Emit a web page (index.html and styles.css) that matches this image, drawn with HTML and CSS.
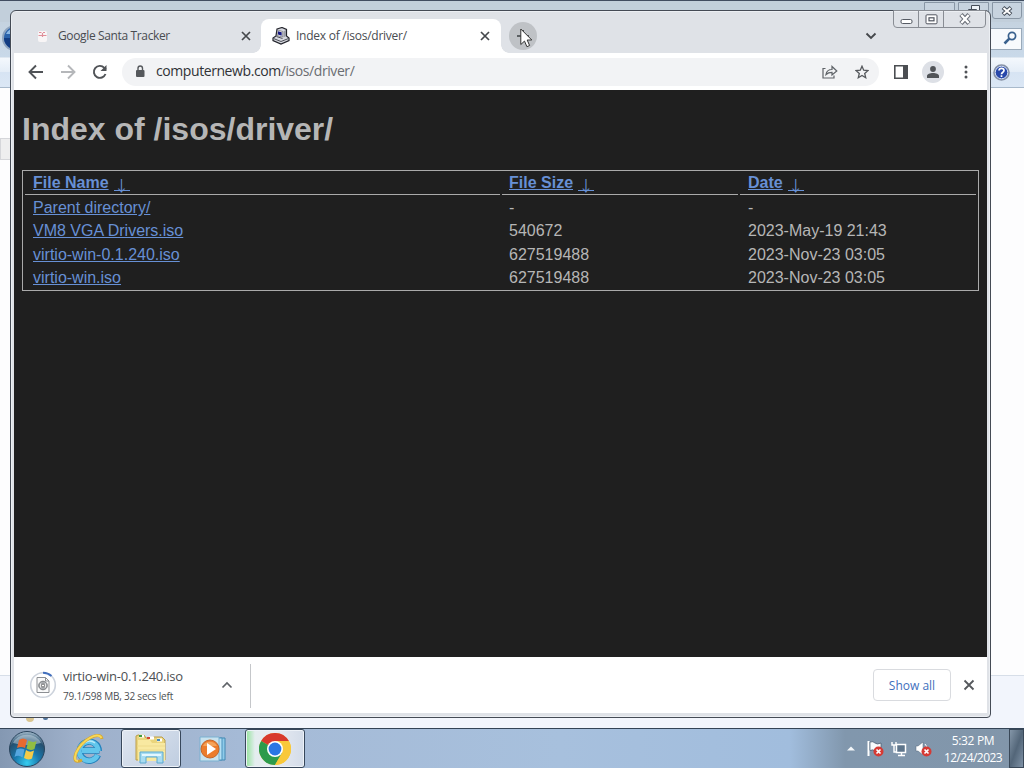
FILE: index.html
```html
<!DOCTYPE html>
<html lang="en">
<head>
    <meta charset="UTF-8">
    <meta name="viewport" content="width=device-width, initial-scale=1.0">
    <title>Index of /isos/driver/</title>
    <link rel="stylesheet" href="styles.css">
</head>
<body>

<div class="desktop">

    <!-- Explorer window behind the browser -->
    <div class="explorer">
        <div class="explorer-title">
            <div class="ex-buttons">
                <span class="ex-btn"></span>
                <span class="ex-btn"><svg width="14" height="12" viewBox="0 0 14 12" fill="#eef3f8" stroke="#454d59"><path d="M4.500 .5h8v6h-8z"/><path d="M1.500 4.500h8v6h-8z"/></svg></span>
                <span class="ex-btn ex-close"><svg width="12" height="10" viewBox="0 0 12 10"><path d="M2 1.500 10 8.500M10 1.500 2 8.500" stroke="#454d59" stroke-width="4"/><path d="M2.500 2 9.500 8M9.500 2 2.500 8" stroke="#fff" stroke-width="2"/></svg></span>
            </div>
        </div>
        <div class="explorer-address">
            <svg class="back-orb" width="26" height="26" viewBox="0 0 26 26"><circle cx="13" cy="13" r="12" fill="#2b63ab" stroke="#8fa5bf" stroke-width="2"/><path d="M2 13a11 11 0 0 0 22 0z" fill="#123c82"/><path d="M4 9a10 10 0 0 1 18 0z" fill="#8db9e4"/></svg>
            <span class="search-box"><svg width="15" height="15" viewBox="0 0 15 15" fill="none" stroke="#39618e"><circle cx="9" cy="5" r="3.600" stroke-width="1.700"/><path d="M6.300 7.700 1.500 12.500" stroke-width="2.600"/></svg></span>
        </div>
        <div class="explorer-commands">
            <svg width="17" height="17" viewBox="0 0 17 17"><circle cx="8.500" cy="8.500" r="7.500" fill="#2747aa" stroke="#8792a5" stroke-width="1.600"/><circle cx="8.500" cy="8.500" r="6.300" fill="none" stroke="#dce6f6"/><path d="M6 6.500C6.200 3.700 11 3.700 11 6.500 11 8.400 8.500 8 8.500 10.200M8.500 11.300v1.800" fill="none" stroke="#fff" stroke-width="1.700"/></svg>
        </div>
        <div class="explorer-body"><span class="nav-item"></span></div>
        <div class="explorer-details"><i class="peek-yellow"></i><i class="peek-blue"></i></div>
    </div>

    <!-- Browser window -->
    <div class="browser">
        <div class="tab-strip">
            <div class="tab">
                <svg class="favicon" width="16" height="16" viewBox="0 0 16 16"><rect x="4" y="3" width="9" height="11" rx="2" fill="#f8f5f6"/><path d="M5 4.500h2.500M9 4.500h2M4.500 7.500h8M8.500 5v4" stroke="#e08f9a" stroke-width="1.200"/></svg>
                <span class="tab-title santa">Google Santa Tracker</span>
                <svg class="tab-close" width="10" height="10" viewBox="0 0 10 10"><path d="m1 1 8 8M9 1 1 9"/></svg>
            </div>
            <div class="tab active">
                <svg class="favicon" width="18" height="18" viewBox="0 0 18 18">
                    <path d="m5 2 5-1.500 4.500 2V9l2.500 2v2.500L9 17 1 13.500V11l3-2z" fill="#d6d8df" stroke="#22232b" stroke-width="1.200"/>
                    <path d="m5.300 3 5.400 1.500V10L5.300 8.500z" fill="#fafafa" stroke="#55575f" stroke-width=".6"/>
                    <path d="m6 4.200 3.700 1.100v3.400L6 7.600z" fill="#181a85"/>
                    <path d="m11.500 4.500 2.500-1.500v6l-2.500 1.500z" fill="#999ca6"/>
                    <path d="m1.500 11.500 7.500 3 7.500-3M4.500 9.500l6 2" stroke="#4d4f57" fill="none"/>
                </svg>
                <span class="tab-title index">Index of /isos/driver/</span>
                <svg class="tab-close" width="10" height="10" viewBox="0 0 10 10"><path d="m1 1 8 8M9 1 1 9"/></svg>
            </div>
            <button class="new-tab"><svg width="12" height="12" viewBox="0 0 12 12"><path d="M0 6h12M6 0v12" stroke="#3c4043" stroke-width="1.700"/></svg></button>
            <svg class="tab-search" width="12" height="8" viewBox="0 0 12 8"><path d="m1.500 1.500 4.500 4.500 4.500-4.500" fill="none" stroke="#45484c" stroke-width="1.900"/></svg>
        </div>

        <div class="window-buttons">
            <span class="win-btn min"><svg width="13" height="7" viewBox="0 0 13 7"><rect x="1" y="1.500" width="11" height="4" rx="1.500" fill="#fff" stroke="#565b64"/></svg></span>
            <span class="win-btn max"><svg width="13" height="11" viewBox="0 0 13 11" fill="#fff" stroke="#50555f"><rect x="1" y=".8" width="11" height="9" rx="1"/><rect x="4" y="3.800" width="5" height="3" stroke-width="1.200"/></svg></span>
            <span class="win-btn close"><svg width="14" height="12" viewBox="0 0 14 12"><path d="m3 1.500 8 9M11 1.500l-8 9" stroke="#6a6f78" stroke-width="4.400"/><path d="m3.300 2 7.400 8M10.700 2 3.300 10" stroke="#fff" stroke-width="2.400"/></svg></span>
        </div>

        <div class="toolbar">
            <svg class="nav-icon" width="16" height="16" viewBox="0 0 16 16" stroke="#505357"><path d="M15 8H2M8 1.500 1.500 8 8 14.500"/></svg>
            <svg class="nav-icon" width="16" height="16" viewBox="0 0 16 16" stroke="#b5b7ba"><path d="M1 8h13M8 1.500 14.500 8 8 14.500"/></svg>
            <svg class="nav-icon" width="16" height="16" viewBox="0 0 16 16" stroke="#505357"><path d="M13.500 10A6 6 0 1 1 12.300 3.800L14 5.500"/><path d="M14.500 1v6h-6z" fill="#505357" stroke="none"/></svg>
            <div class="omnibox">
                <svg width="10" height="13" viewBox="0 0 10 13"><rect x="1" y="5" width="8.500" height="7" rx="1" fill="#55585c"/><path d="M3 5V3.200a2.200 2.200 0 0 1 4.500 0V5" fill="none" stroke="#55585c" stroke-width="1.400"/></svg>
                <span class="url">computernewb.com<span class="path">/isos/driver/</span></span>
                <svg class="share" width="16" height="14" viewBox="0 0 16 14" fill="none" stroke="#5f6368" stroke-width="1.200"><path d="M3.500 3.500H1v9.500h11v-2.500"/><path d="M4 9.500c.5-3.500 2.500-5 6-5V1.500l4.800 4.500-4.800 4V7.300C7.300 7.300 5.500 8 4 9.500z"/></svg>
                <svg width="14" height="14" viewBox="0 0 14 14"><path d="m7 1.200 1.700 4 4.300.4-3.300 2.900 1 4.200L7 10.500l-3.700 2.200 1-4.200L1 5.600l4.300-.4z" fill="none" stroke="#55585c" stroke-width="1.300"/></svg>
            </div>
            <svg class="panel" width="14" height="14" viewBox="0 0 14 14"><path d="M.8.800h12.400v12.400H.8z" fill="#fff" stroke="#4b4e52" stroke-width="1.600"/><path d="M9 0h5v14H9z" fill="#4b4e52"/></svg>
            <span class="avatar"><svg width="12" height="12" viewBox="0 0 12 12" fill="#505357"><circle cx="6" cy="3" r="2.900"/><path d="M0 12v-2c0-4 12-4 12 0v2z"/></svg></span>
            <svg class="menu" width="4" height="14" viewBox="0 0 4 14" fill="#505357"><circle cx="2" cy="2" r="1.500"/><circle cx="2" cy="7" r="1.500"/><circle cx="2" cy="12" r="1.500"/></svg>
        </div>

        <div class="page">
            <h1>Index of /isos/driver/</h1>
            <table>
                <thead>
                    <tr>
                        <th class="name"><a href="#">File Name</a><a href="#" class="sort">↓</a></th>
                        <th class="size"><a href="#">File Size</a><a href="#" class="sort">↓</a></th>
                        <th class="date"><a href="#">Date</a><a href="#" class="sort">↓</a></th>
                    </tr>
                </thead>
                <tbody>
                    <tr><td><a href="#">Parent directory/</a></td><td class="size">-</td><td>-</td></tr>
                    <tr><td><a href="#">VM8 VGA Drivers.iso</a></td><td class="size">540672</td><td>2023-May-19 21:43</td></tr>
                    <tr><td><a href="#">virtio-win-0.1.240.iso</a></td><td class="size">627519488</td><td>2023-Nov-23 03:05</td></tr>
                    <tr><td><a href="#">virtio-win.iso</a></td><td class="size">627519488</td><td>2023-Nov-23 03:05</td></tr>
                </tbody>
            </table>
        </div>

        <div class="downloads">
            <svg class="progress" width="28" height="28" viewBox="0 0 28 28" fill="none"><circle cx="14" cy="14" r="12.300" stroke="#cdd3dc" stroke-width="1.600"/><path d="M14 1.700A12.300 12.300 0 0 1 22.500 5" stroke="#4370bd" stroke-width="2"/><path d="M8 6.500h8.500l3.500 3.500v11.500H8z" fill="#fafafa" stroke="#8c8f93"/><path d="M16.500 6.500V10H20" stroke="#8c8f93"/><circle cx="14" cy="14.500" r="4.300" fill="#a9acb0" stroke="#7a7d80"/><circle cx="14" cy="14.500" r="1.500" fill="#fff" stroke="#777"/><path d="M11.500 12.500v4M16.500 12.500v4" stroke="#e8e8e8"/></svg>
            <div class="download-text">
                <span class="download-name">virtio-win-0.1.240.iso</span>
                <span class="download-status">79.1/598 MB, 32 secs left</span>
            </div>
            <svg class="chevron" width="12" height="8" viewBox="0 0 12 8"><path d="m1.500 6.500 4.500-4.500 4.500 4.500" fill="none" stroke="#5f6368" stroke-width="1.700"/></svg>
            <span class="divider"></span>
            <button class="show-all"><span>Show all</span></button>
            <svg class="shelf-close" width="12" height="12" viewBox="0 0 12 12"><path d="m1.500 1.500 9 9M10.500 1.500l-9 9" stroke="#55585c" stroke-width="1.800"/></svg>
        </div>
    </div>

    <div class="taskbar">
        <svg class="start" width="38" height="38" viewBox="0 0 38 38">
            <defs>
                <radialGradient id="orb" cx=".5" cy=".9" r=".9"><stop offset="0" stop-color="#36cdf0"/><stop offset=".4" stop-color="#1978ad"/><stop offset=".75" stop-color="#25506f"/><stop offset="1" stop-color="#a9bfd0"/></radialGradient>
            </defs>
            <circle cx="19" cy="19" r="17.500" fill="url(#orb)" stroke="#29445d"/>
            <path d="M5 13a15 13 0 0 1 28 0q-14 4-28 0z" fill="#dbe8f2" opacity=".45"/>
            <path d="M11 10q4-3 8 0l-2 8q-4-2-8 0z" fill="#e66a31"/>
            <path d="M20.500 10.500q4 2.500 8 .5l-2 8q-4 2-8-.5z" fill="#91bd43"/>
            <path d="M8.500 19.500q4-2 8 0l-2 8q-4-3-8-.5z" fill="#55a6df"/>
            <path d="M18 20q4 3 8 .5l-2 8q-4 2-8-.5z" fill="#f5cb48"/>
        </svg>
        <div class="task ie">
            <svg width="34" height="34" viewBox="0 0 34 34" fill="none">
                <path d="M28.500 18.500H11M27 23a9.500 9.500 0 1 1 .8-4" stroke="#2382bd" stroke-width="6.400"/>
                <path d="M28 18.500H11M26.500 23a9.500 9.500 0 1 1 .8-4" stroke="#63c6ec" stroke-width="4.800"/>
                <path d="M11 13a9 9 0 0 1 13-2" stroke="#b9eafa" stroke-width="1.500"/>
                <path d="M31 7C30-2 11 7 5 21c-3 8 0 10 6 7" stroke="#d6a72d" stroke-width="3"/>
                <path d="M30.500 6C27-1 11 8 5 21c-2 6-1 8 2 8" stroke="#f8d858" stroke-width="2"/>
            </svg>
        </div>
        <div class="task open">
            <svg width="34" height="32" viewBox="0 0 34 32">
                <path d="M2 5V3l2-1h6l2 3h6l1-1h9l3 3v20H2z" fill="#ead57c" stroke="#bb9d4b"/>
                <path d="M4 7h12l2 3h13v18H4z" fill="#f8e9a1"/>
                <path d="M5 3h5M15 5h5M23 7h5" stroke="#fff" stroke-width="3"/>
                <path d="M5 3h3" stroke="#3e9c40" stroke-width="2"/><path d="M13 5h3" stroke="#d34531" stroke-width="2"/><path d="M23 7h3" stroke="#458bc2" stroke-width="2"/>
                <path d="M3 13h28M3 17h28" stroke="#eedb8c"/>
                <path d="M6 19h23v11h-6v-6H12v6H6z" fill="#a8dcf1" stroke="#5ba8ce"/>
                <path d="M8 22h19" stroke="#e3f7ff" stroke-width="2"/>
            </svg>
        </div>
        <div class="task player">
            <svg width="28" height="26" viewBox="0 0 28 26">
                <path d="M8 2h18v22H8z" fill="#8fcbe9" stroke="#4388b2"/><path d="M5 2h18v22H5z" fill="#b5e0f3" stroke="#4b92bd"/>
                <path d="M1 1h19v24H1z" fill="#c8e2ee" stroke="#7ab1d1"/>
                <circle cx="11" cy="13" r="9" fill="#ec7c2c" stroke="#c46629"/><path d="M4 10a8 8 0 0 1 14 0z" fill="#f8b46d" opacity=".7"/>
                <path d="m8 7 9 6-9 6z" fill="#fff"/>
            </svg>
        </div>
        <div class="task open chrome-task">
            <svg width="32" height="32" viewBox="0 0 32 32">
                <circle cx="16" cy="16" r="16" fill="#f9c83a"/>
                <path d="M16 16 2.140 8A16 16 0 0 1 29.860 8z" fill="#d8392d"/>
                <path d="M2.140 8A16 16 0 0 0 16 32l7-12-7-4z" fill="#2d9b4c"/>
                <path d="M16 8h13.860A16 16 0 0 1 16 32l7-12z" fill="#f9c83a"/>
                <circle cx="16" cy="16" r="8" fill="#fff"/><circle cx="16" cy="16" r="6.400" fill="#2976e3"/>
            </svg>
        </div>
        <div class="tray">
            <svg width="8" height="5" viewBox="0 0 8 5"><path d="m0 4.500 4-4 4 4z" fill="#f4f7fa"/></svg>
            <svg class="flag" width="17" height="17" viewBox="0 0 17 17"><path d="M1.500 1v15" stroke="#fff" stroke-width="2"/><path d="M3 2q3-1 5 1t6 0v8q-4 2-6 0t-5-.5z" fill="#f8fafc" stroke="#45566a" stroke-width=".7"/><circle cx="11.500" cy="11.500" r="5" fill="#d63a34"/><path d="m9.500 9.500 4 4M13.500 9.500l-4 4" stroke="#fff" stroke-width="1.700"/></svg>
            <svg class="network" width="16" height="16" viewBox="0 0 16 16" fill="none" stroke="#fff"><path d="M5.500 3.500h9v8h-9z" fill="#5e758b" stroke-width="1.500"/><path d="M7 14.500h7M10.500 12v2M1 1v3h4V1M3 4v7h2" stroke-width="1.400"/></svg>
            <svg class="sound" width="17" height="16" viewBox="0 0 17 16"><path d="M1 5h2l5-4v13l-5-4H1z" fill="#fff" stroke="#53667a" stroke-width=".5"/><path d="M10 3q2 2 2 5" fill="none" stroke="#fff"/><circle cx="11.500" cy="10.500" r="5" fill="#d63a34"/><path d="m9.500 8.500 4 4M13.500 8.500l-4 4" stroke="#fff" stroke-width="1.700"/></svg>
            <div class="clock"><span class="time">5:32 PM</span><span class="day">12/24/2023</span></div>
            <span class="show-desktop"></span>
        </div>
    </div>

    <svg class="cursor" width="13" height="20" viewBox="0 0 13 20"><path d="M.8 1v15.500l3.700-3.400 2.400 5.600 2.700-1.200L7.200 12h4.600z" fill="#fff" stroke="#333"/></svg>
</div>

</body>
</html>
```
FILE: styles.css
```css
* {
    box-sizing: border-box;
}

body {
    margin: 0;
    font-family: "Open Sans", "Noto Sans", sans-serif;
    overflow: hidden;
}

svg {
    display: block;
    flex-shrink: 0;
}

button {
    padding: 0;
    border: none;
    font-family: inherit;
}

.desktop {
    position: relative;
    width: 1024px;
    height: 768px;
    display: flex;
    flex-direction: column;
    overflow: hidden;
    background: #fff;
}

/* Explorer window */
.explorer {
    height: 728px;
    display: flex;
    flex-direction: column;
}

.explorer-title {
    height: 22px;
    border-top: 1px solid #414d61;
    background: #c2cfdb;
    display: flex;
    justify-content: flex-end;
}

.ex-buttons {
    display: flex;
    gap: 3px;
    padding: 1px 2px 0 0;
}

.ex-btn {
    width: 31px;
    height: 17px;
    border: 1px solid #8896a5;
    border-radius: 0 0 3px 3px;
    display: flex;
    align-items: center;
    justify-content: center;
    background: #c7d3df;
}

.ex-close {
    width: 30px;
}

.explorer-address {
    height: 35px;
    display: flex;
    align-items: center;
    justify-content: space-between;
    padding: 0 2px;
    background: linear-gradient(#c5d3e0, #c9d9e9);
}

.back-orb {
    margin-bottom: 4px;
}

.search-box {
    width: 40px;
    height: 22px;
    margin-bottom: 2px;
    display: flex;
    align-items: center;
    justify-content: flex-end;
    padding-right: 3px;
    background: #f7fafd;
    border: 1px solid #9aaaba;
}

.explorer-commands {
    height: 31px;
    display: flex;
    align-items: center;
    justify-content: flex-end;
    padding-right: 14px;
    background: linear-gradient(#f4f8fd, #e4edf7 48%, #d7e4f3 50%, #dbe7f5);
    border-top: 1px solid #dfe8f1;
    border-bottom: 1px solid #a8b9cb;
}

.explorer-body {
    flex: 1;
    padding-top: 50px;
    background: #fdfdfe;
}

.nav-item {
    display: block;
    width: 12px;
    height: 22px;
    background: #eeeeef;
    border: 1px solid #d5d6da;
}

.explorer-details {
    height: 53px;
    display: flex;
    align-items: flex-start;
    gap: 9px;
    padding: 42px 0 0 26px;
    background: #f2f5fc;
    border-top: 1px solid #d7dee8;
}

.peek-yellow,
.peek-blue {
    width: 8px;
    height: 4px;
    border-radius: 0 0 4px 4px;
    background: #d9c590;
}

.peek-blue {
    width: 5px;
    height: 2px;
    background: #52759c;
}

/* Browser window */
.browser {
    position: absolute;
    left: 10px;
    top: 10px;
    width: 981px;
    height: 708px;
    padding: 0 3px 3px;
    display: flex;
    flex-direction: column;
    border: 1px solid #454b55;
    border-radius: 6px 6px 4px 4px;
    background: #dfe2e7;
    box-shadow: inset 0 0 0 1px #eceff3;
}

.tab-strip {
    height: 42px;
    padding: 8px 110px 0 8px;
    display: flex;
    align-items: center;
}

.tab {
    width: 239px;
    height: 34px;
    display: flex;
    align-items: center;
    padding: 0 10px 0 12px;
}

.tab.active {
    position: relative;
    width: 240px;
    padding: 0 11px;
    background: #fff;
    border-radius: 8px 8px 0 0;
}

.tab.active::before,
.tab.active::after {
    content: "";
    position: absolute;
    bottom: 0;
    width: 8px;
    height: 8px;
}

.tab.active::before {
    left: -8px;
    background: radial-gradient(circle at 0 0, transparent 7.5px, #fff 8px);
}

.tab.active::after {
    right: -8px;
    background: radial-gradient(circle at 100% 0, transparent 7.5px, #fff 8px);
}

.tab-title {
    flex: 1;
    padding-left: 8px;
    font-size: 12px;
    line-height: 16px;
    white-space: nowrap;
    color: #494c51;
}

.santa {
    letter-spacing: -0.36px;
}

.active .favicon {
    margin-right: -2px;
}

.index {
    letter-spacing: -0.25px;
}

.tab-close {
    stroke: #45484c;
    stroke-width: 1.7px;
}

.new-tab {
    width: 28px;
    height: 28px;
    margin-left: 8px;
    border-radius: 50%;
    background: #bfc2c6;
    display: flex;
    align-items: center;
    justify-content: center;
}

.tab-search {
    margin-left: auto;
}

.window-buttons {
    position: absolute;
    right: 4px;
    top: -1px;
    display: flex;
    border: 1px solid #898d94;
    border-radius: 0 0 4px 4px;
}

.win-btn {
    width: 25px;
    height: 16px;
    display: flex;
    align-items: center;
    justify-content: center;
    border-right: 1px solid #898d94;
}

.win-btn.min {
    padding-top: 5px;
}

.win-btn.close {
    width: 41px;
    border-right: none;
}

.toolbar {
    height: 37px;
    display: flex;
    align-items: center;
    padding: 0 19px 0 14px;
    background: #fff;
}

.nav-icon {
    margin-right: 16px;
    fill: none;
    stroke-width: 1.9px;
}

.omnibox {
    width: 757px;
    height: 28px;
    margin-left: -2px;
    display: flex;
    align-items: center;
    padding: 0 10px 0 13px;
    border-radius: 14px;
    background: #f2f3f5;
}

.url {
    padding: 0 0 1px 11px;
    font-size: 14px;
    line-height: 20px;
    letter-spacing: -0.42px;
    color: #303236;
}

.path {
    color: #6a6d72;
}

.share {
    margin: 0 17px 0 auto;
}

.panel {
    margin-left: 15px;
}

.avatar {
    width: 22px;
    height: 22px;
    margin-left: 14px;
    display: flex;
    align-items: center;
    justify-content: center;
    border-radius: 50%;
    background: #dde0e6;
}

.menu {
    margin-left: auto;
}

/* Directory listing */
.page {
    height: 567px;
    padding: 0 8px;
    background: #1f1f1f;
    color: #b6b6b6;
    font-family: "Liberation Sans", Arial, sans-serif;
    font-size: 16px;
}

h1 {
    margin: 0;
    padding: 21px 0 22px;
    font-size: 32px;
    line-height: 37px;
}

table {
    width: 957px;
    height: 121px;
    table-layout: fixed;
    border: 1px solid #aaa;
    border-spacing: 2px;
}

th,
td {
    height: 21px;
    padding: 0 8px;
    line-height: 21px;
    text-align: left;
}

th {
    height: 22px;
    padding-bottom: 2px;
    border-bottom: 1px solid #aaa;
    line-height: 19px;
}

.name {
    width: 475px;
}

.size {
    width: 236px;
    padding-left: 7px;
}

.page a {
    color: #6790d5;
}

.page a.sort {
    display: inline-block;
    width: 16px;
    height: 13px;
    margin-left: 5px;
    border-bottom: 1px solid #6790d5;
    font-family: "Noto Sans CJK JP", sans-serif;
    font-size: 15px;
    font-weight: normal;
    line-height: 13px;
    text-align: center;
    text-decoration: none;
    vertical-align: -3px;
}

/* Download shelf */
.downloads {
    height: 56px;
    display: flex;
    align-items: center;
    padding: 0 12px 0 15px;
    background: #fff;
}

.download-text {
    width: 164px;
    padding-left: 6px;
    display: flex;
    flex-direction: column;
    white-space: nowrap;
}

.download-name {
    font-size: 13px;
    line-height: 20px;
    letter-spacing: -0.25px;
    color: #4c4f53;
}

.download-status {
    padding-top: 1px;
    font-size: 10px;
    line-height: 18px;
    letter-spacing: -0.22px;
    color: #4c4f53;
}

.divider {
    width: 1px;
    height: 44px;
    margin: 2px 0 0 17px;
    background: #c5c7ca;
}

.show-all {
    width: 78px;
    height: 32px;
    margin-left: auto;
    border: 1px solid #d9dbdf;
    border-radius: 4px;
    background: #fff;
    color: #3f6fbd;
    font-size: 12px;
    font-weight: 500;
}

.shelf-close {
    margin-left: 12px;
}

/* Taskbar */
.taskbar {
    height: 40px;
    display: flex;
    align-items: center;
    border-top: 1px solid #344456;
    background: linear-gradient(90deg, #8498b2 0, #9eb0ca 75px, #a5bad6 240px, #a7c0dd 560px, #a1bddd 790px, #8197ad 845px, #8296aa 1024px);
}

.start {
    margin-left: 8px;
}

.task {
    height: 39px;
    display: flex;
    align-items: center;
    justify-content: center;
}

.ie {
    width: 75px;
    padding-left: 9px;
}

.open {
    width: 60px;
    border: 1px solid #37475b;
    border-radius: 3px;
    background: linear-gradient(135deg, #dfe6f0, #bfcde0);
    box-shadow: inset 0 0 0 1px #edf2f8;
}

.player {
    width: 64px;
    padding-right: 1px;
}

.chrome-task {
    background: linear-gradient(90deg, #94e39c, #e4edef 9px, #e8ebf2 50%, #d3dce9);
}

.tray {
    height: 39px;
    margin-left: auto;
    display: flex;
    align-items: center;
}

.flag {
    margin-left: 12px;
}

.network {
    margin-left: 7px;
}

.sound {
    margin-left: 8px;
}

.clock {
    width: 60px;
    margin: 0 6px 0 11px;
    display: flex;
    flex-direction: column;
    align-items: center;
    font-size: 12px;
    line-height: 17px;
    color: #fff;
    white-space: nowrap;
}

.time {
    letter-spacing: -0.35px;
}

.day {
    letter-spacing: -0.55px;
}

.show-desktop {
    width: 15px;
    height: 39px;
    border: 1px solid #394858;
    background: linear-gradient(110deg, #8496a8, #536679 50%, #7f92a6);
}

.cursor {
    position: absolute;
    left: 520px;
    top: 28px;
}
```
